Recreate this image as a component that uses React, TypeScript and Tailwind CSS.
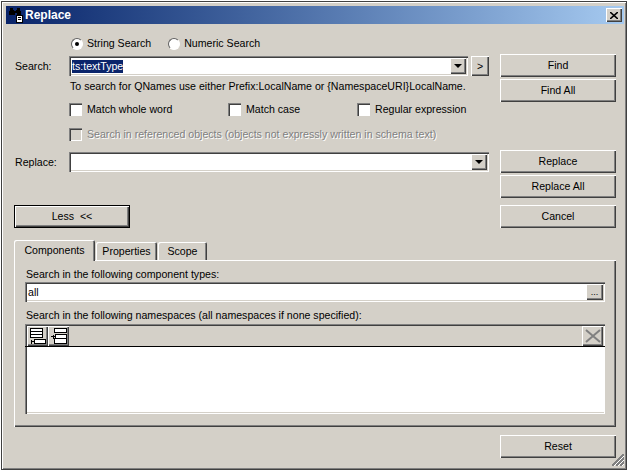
const raised =
  "bg-[#d4d0c8] shadow-[inset_1px_1px_0_#ffffff,inset_-1px_-1px_0_#404040,inset_-2px_-2px_0_#808080]";
const sunken =
  "bg-white shadow-[inset_1px_1px_0_#808080,inset_2px_2px_0_#404040,inset_-1px_-1px_0_#ffffff,inset_-2px_-2px_0_#d4d0c8]";

function Btn({ label, className = "" }: { label: string; className?: string }) {
  return (
    <div className={`flex h-[23px] w-[116px] items-center justify-center ${raised} ${className}`}>
      {label}
    </div>
  );
}

function Combo({ children, className = "" }: { children?: React.ReactNode; className?: string }) {
  return (
    <div className={`flex h-[20px] shrink-0 items-stretch p-[2px] ${sunken} ${className}`}>
      <div className="flex flex-1 items-center pl-[1px]">{children}</div>
      <div className={`flex w-[16px] items-center justify-center ${raised}`}>
        <div className="h-0 w-0 border-x-[4px] border-t-[4px] border-x-transparent border-t-black" />
      </div>
    </div>
  );
}

function Check({ label, disabled, className = "" }: { label: string; disabled?: boolean; className?: string }) {
  return (
    <div className={`flex items-center gap-[5px] ${className}`}>
      <div
        className={`h-[13px] w-[13px] shrink-0 shadow-[inset_1px_1px_0_#808080,inset_2px_2px_0_#404040,inset_-1px_-1px_0_#ffffff] ${
          disabled ? "bg-[#d4d0c8]" : "bg-white"
        }`}
      />
      <span className={disabled ? "text-[#808080] [text-shadow:1px_1px_0_#ffffff]" : ""}>{label}</span>
    </div>
  );
}

function Radio({ label, checked }: { label: string; checked?: boolean }) {
  return (
    <div className="flex items-center gap-[4px]">
      <div className="flex h-[12px] w-[12px] items-center justify-center rounded-full border border-t-[#606060] border-r-[#ffffff] border-b-[#ffffff] border-l-[#606060] bg-white">
        {checked && <div className="h-[4px] w-[4px] rounded-full bg-black" />}
      </div>
      <span>{label}</span>
    </div>
  );
}

function ListIcon({ flip }: { flip?: boolean }) {
  return (
    <svg width="18" height="17" viewBox="0 0 18 17" fill="none" stroke="#000" shapeRendering="crispEdges">
      {flip ? (
        <>
          <path d="M4.5 0.5h12v4h-12zM5.5 6.5h11v4h-11zM4.5 10.5h12v5h-12z" fill="#fff" />
          <path d="M1 8.5h4M3 6.5v4" />
        </>
      ) : (
        <>
          <path d="M1.5 0.5h12v3h-12zM1.5 3.5h12v3h-12zM1.5 6.5h12v3h-12z" fill="#fff" />
          <path d="M5.5 11.5h11v4h-11z" fill="#fff" />
          <path d="M2 13.5h4M2 11.5v4" />
        </>
      )}
    </svg>
  );
}

function Tab({ label, active, className = "" }: { label: string; active?: boolean; className?: string }) {
  return (
    <div
      className={`flex shrink-0 items-center justify-center rounded-t-[2px] bg-[#d4d0c8] shadow-[inset_1px_1px_0_#ffffff,inset_-1px_0_0_#404040,inset_-2px_0_0_#808080] ${
        active ? "z-10 -mb-[1px] h-[21px]" : "h-[18px]"
      } ${className}`}
    >
      {label}
    </div>
  );
}

export default function App() {
  return (
    <div className="h-[471px] w-[630px] overflow-hidden bg-white pt-[1px] pr-[3px] pb-[1px] pl-[1px] font-['Liberation_Sans',Arial,sans-serif] text-[10.6px] leading-[13px] text-black">
      <div className="relative flex h-full flex-col bg-[#d4d0c8] pt-[5px] pr-[3px] pl-[5px] shadow-[inset_0_0_0_1px_#404040,inset_2px_2px_0_#ffffff,inset_-2px_-2px_0_#808080]">
        {/* title bar */}
        <div className="flex h-[18px] shrink-0 items-center bg-gradient-to-r from-[#0a246a] to-[#a6caf0] pr-[2px] pl-[2px]">
          <svg width="16" height="16" viewBox="0 0 16 16" shapeRendering="crispEdges">
            <path d="M2 1h3v2h1v1h2V3h1V1h3v3h1v4H9V6H7v2H1V4h1z" fill="#000" />
            <path d="M8.5 8.5h6v7h-6z" fill="#fff" stroke="#000" />
            <path d="M10 10.5h3M10 12.5h3" stroke="#000" />
          </svg>
          <span className="ml-[1px] text-[12px] font-bold text-white">Replace</span>
          <div className={`ml-auto flex h-[14px] w-[16px] items-center justify-center ${raised}`}>
            <svg width="8" height="7" viewBox="0 0 8 7" stroke="#000" strokeWidth="1.6">
              <path d="M0 0l8 7M8 0L0 7" />
            </svg>
          </div>
        </div>

        {/* search and replace */}
        <div className="mt-[13px] flex h-[191px] shrink-0 pl-[8px]">
          <div className="w-[475px] shrink-0">
            <div className="ml-[57px] flex h-[13px] gap-[17px]">
              <Radio label="String Search" checked />
              <Radio label="Numeric Search" />
            </div>
            <div className="mt-[6px] flex items-center">
              <span className="w-[55px] shrink-0 pl-[1px]">Search:</span>
              <Combo className="w-[399px]">
                <span className="bg-[#0a246a] text-white">ts:textType</span>
              </Combo>
              <div className={`ml-[3px] flex h-[20px] w-[18px] shrink-0 items-center justify-center ${raised}`}>&gt;</div>
            </div>
            <div className="mt-[4px] ml-[56px]">To search for QNames use either Prefix:LocalName or {"{NamespaceURI}"}LocalName.</div>
            <div className="mt-[10px] ml-[55px] flex h-[13px]">
              <Check label="Match whole word" className="w-[159px]" />
              <Check label="Match case" className="w-[129px]" />
              <Check label="Regular expression" />
            </div>
            <Check disabled label="Search in referenced objects (objects not expressly written in schema text)" className="mt-[12px] ml-[55px]" />
            <div className="mt-[11px] flex items-center">
              <span className="w-[55px] shrink-0 pl-[1px]">Replace:</span>
              <Combo className="w-[420px]" />
            </div>
            <div className="mt-[33px] flex h-[23px] w-[116px] items-center justify-center bg-[#d4d0c8] whitespace-pre shadow-[inset_0_0_0_1px_#000000,inset_2px_2px_0_#ffffff,inset_-2px_-2px_0_#404040,inset_-3px_-3px_0_#808080]">
              {"Less  <<"}
            </div>
          </div>
          <div className="ml-[11px] flex flex-col">
            <Btn label="Find" className="mt-[17px]" />
            <Btn label="Find All" className="mt-[2px]" />
            <Btn label="Replace" className="mt-[48px]" />
            <Btn label="Replace All" className="mt-[2px]" />
            <Btn label="Cancel" className="mt-[7px]" />
          </div>
        </div>

        {/* tabs */}
        <div className="mt-[12px] ml-[8px] flex h-[20px] w-[602px] shrink-0 items-end gap-[1px]">
          <Tab label="Components" active className="w-[81px]" />
          <Tab label="Properties" className="w-[61px]" />
          <Tab label="Scope" className="w-[49px]" />
        </div>
        <div className="ml-[8px] flex h-[167px] w-[602px] shrink-0 flex-col px-[11px] pt-[8px] shadow-[inset_1px_1px_0_#ffffff,inset_-1px_-1px_0_#404040,inset_-2px_-2px_0_#808080]">
          <div className="pl-[1px]">Search in the following component types:</div>
          <div className={`mt-[1px] flex h-[20px] items-stretch p-[2px] ${sunken}`}>
            <div className="flex flex-1 items-center pl-[1px]">all</div>
            <div className={`flex w-[17px] items-end justify-center pb-[3px] text-[9px] leading-[9px] ${raised}`}>...</div>
          </div>
          <div className="mt-[7px] pl-[1px]">Search in the following namespaces (all namespaces if none specified):</div>
          <div className="mt-[2px] flex h-[90px] flex-col shadow-[inset_1px_1px_0_#808080,inset_2px_2px_0_#404040,inset_-1px_-1px_0_#ffffff,inset_-2px_-2px_0_#d4d0c8]">
            <div className="flex h-[23px] items-end border-b border-black pr-[2px] pl-[2px]">
              <div className={`flex h-[20px] w-[21px] items-center justify-center ${raised}`}>
                <ListIcon />
              </div>
              <div className={`flex h-[20px] w-[21px] items-center justify-center ${raised}`}>
                <ListIcon flip />
              </div>
              <div className={`ml-auto flex h-[20px] w-[21px] items-center justify-center ${raised}`}>
                <svg width="16" height="14" viewBox="0 0 16 14" stroke="#808080" strokeWidth="2">
                  <path d="M1 1l14 12M15 1L1 13" />
                </svg>
              </div>
            </div>
            <div className="mr-[1px] mb-[2px] ml-[2px] flex-1 bg-white" />
          </div>
        </div>

        <div className="mt-[8px] flex justify-end pr-[8px]">
          <Btn label="Reset" />
        </div>

        {/* resize grip */}
        <svg className="absolute right-[3px] bottom-[4px]" width="12" height="12" viewBox="0 0 12 12" fill="none" shapeRendering="crispEdges">
          <path d="M12 0L0 12M12 4L4 12M12 8L8 12" stroke="#808080" strokeWidth="1.5" />
          <path d="M12 2L2 12M12 6L6 12M12 10L10 12" stroke="#ffffff" strokeWidth="1" />
        </svg>
      </div>
    </div>
  );
}
